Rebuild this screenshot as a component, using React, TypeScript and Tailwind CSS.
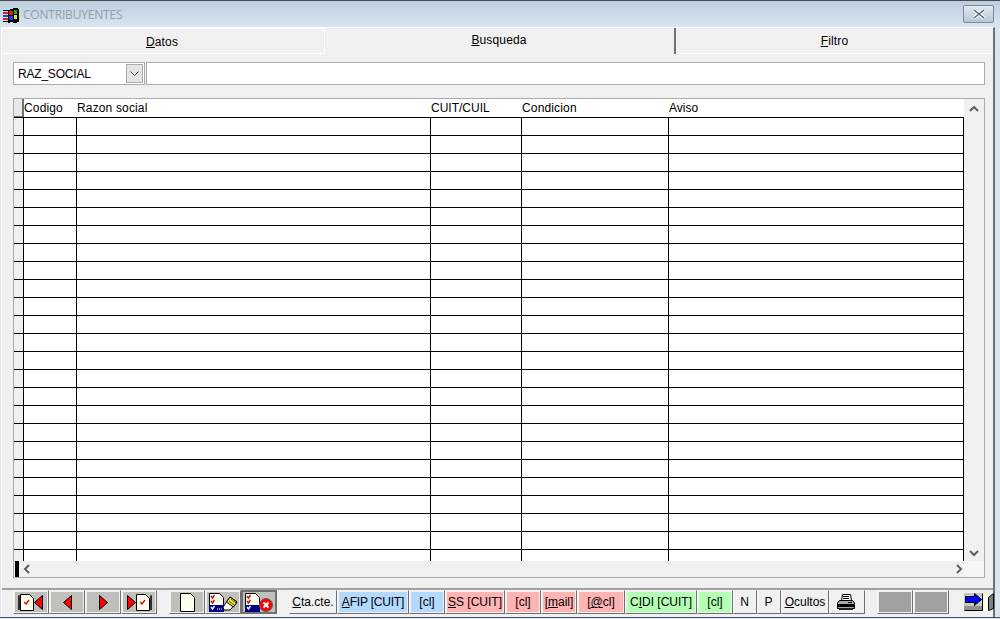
import type { ReactNode } from "react";

const FONT = "font-['Liberation_Sans',Arial,sans-serif]";

const rows = Array.from({ length: 25 }, (_, i) => i);

function WindowIcon() {
  return (
    <svg width="16" height="15" viewBox="0 0 16 15" shapeRendering="crispEdges">
      <path d="M5 2h2v-1h3v-1h5v1h1v13h-2v1h-4v-1h-3v1h-2z" fill="#000" />
      <rect x="6" y="3" width="4" height="4" fill="#e02020" />
      <rect x="11" y="2" width="3" height="4" fill="#18b818" />
      <rect x="6" y="8" width="4" height="4" fill="#2040e0" />
      <rect x="11" y="7" width="3" height="4" fill="#e8e020" />
      <rect x="0" y="2" width="5" height="1" fill="#000" />
      <rect x="0" y="4" width="5" height="2" fill="#e02020" />
      <rect x="0" y="7" width="5" height="2" fill="#2040e0" />
      <rect x="0" y="10" width="5" height="2" fill="#e02020" />
      <rect x="0" y="13" width="5" height="1" fill="#000" />
    </svg>
  );
}

function Chevron({ dir }: { dir: "up" | "down" | "left" | "right" }) {
  const d = {
    up: "M1 6 L5 2 L9 6",
    down: "M1 3 L5 7 L9 3",
    left: "M7 1 L3 5 L7 9",
    right: "M3 1 L7 5 L3 9",
  }[dir];
  return (
    <svg width="10" height="10" viewBox="0 0 10 10" fill="none">
      <path d={d} stroke="#606060" strokeWidth="2" />
    </svg>
  );
}

function Page({ x = 0 }: { x?: number }) {
  return (
    <g>
      <path d={`M${x + 0.5} 0.5H${x + 9.5}L${x + 13.5} 4.5V16.5H${x + 0.5}Z`} fill="#fffff0" stroke="#000" />
      <path d={`M${x + 4} 8l2 2 3-4`} stroke="#e00000" strokeWidth="1.3" fill="none" />
    </g>
  );
}

function FirstIcon() {
  return (
    <svg width="26" height="17" viewBox="0 0 26 17">
      <path d="M1 1v15M0 3h2M0 5h2M0 7h2M0 9h2M0 11h2M0 13h2M0 15h2" stroke="#000" />
      <Page x={2} />
      <path d="M24.5 1.5V15.5L16.5 8.5Z" fill="#ff0000" stroke="#000" />
    </svg>
  );
}

function LastIcon() {
  return (
    <svg width="26" height="17" viewBox="0 0 26 17">
      <path d="M25 1v15M24 3h2M24 5h2M24 7h2M24 9h2M24 11h2M24 13h2M24 15h2" stroke="#000" />
      <Page x={10} />
      <path d="M1.5 1.5V15.5L9.5 8.5Z" fill="#ff0000" stroke="#000" />
    </svg>
  );
}

function Arrow({ left }: { left?: boolean }) {
  return (
    <svg width="9" height="15" viewBox="0 0 9 15">
      <path d={left ? "M8.5 .5V14.5L.5 7.5Z" : "M.5 .5V14.5L8.5 7.5Z"} fill="#ff0000" stroke="#000" />
    </svg>
  );
}

function ListPage({ children }: { children?: ReactNode }) {
  return (
    <svg width="29" height="19" viewBox="0 0 29 19">
      <path d="M.5 .5H10.5L14.5 4.5V18.5H.5Z" fill="#fffff0" stroke="#000" />
      <rect x="0" y="12" width="15" height="7" fill="#000080" />
      <path d="M2 3l1.5 2 2-3M2 8l1.5 2 2-3" stroke="#e00000" strokeWidth="1.4" fill="none" />
      <path d="M2 14l1.5 2 2-3" stroke="#fff" strokeWidth="1.4" fill="none" />
      {children}
    </svg>
  );
}

function PrinterIcon() {
  return (
    <svg width="18" height="16" viewBox="0 0 18 16">
      <path d="M5.5 .5H13.5L14.5 6.5H4.5Z" fill="#fff" stroke="#000" />
      <path d="M6 2.5H12M6 4.5H12" stroke="#000" />
      <path d="M2.5 6.5H15.5L17.5 9V14.5H.5V9Z" fill="#a8a8a8" stroke="#000" />
      <rect x="1" y="10" width="16" height="3" fill="#000" />
      <rect x="11" y="8" width="4" height="1" fill="#000" />
      <rect x="2" y="14" width="14" height="2" fill="#202020" />
    </svg>
  );
}

function ExitIcon() {
  return (
    <svg width="31" height="18" viewBox="0 0 31 18">
      <rect x="0" y="0" width="18" height="18" fill="#c8c8c0" />
      <rect x="0" y="13" width="18" height="4" fill="#909090" />
      <path d="M.5 17.5H18.5V.5" fill="none" stroke="#000" />
      <path d="M1.5 3.5H10.5V.5L17.5 6.5L10.5 12.5V9.5H1.5Z" fill="#0000ff" stroke="#000" />
      <rect x="19" y="1" width="5" height="17" fill="#fffff0" />
      <path d="M24.5 17.5V4.5L29.5 .5V15.5Z" fill="#808080" stroke="#000" />
    </svg>
  );
}

function ToolButton({
  children,
  width,
  color = "bg-[#f0f0f0]",
  pressed,
}: {
  children?: ReactNode;
  width: string;
  color?: string;
  pressed?: boolean;
}) {
  return (
    <div
      className={`flex h-[24px] shrink-0 items-center justify-center text-[12px] text-black ${width} ${
        pressed
          ? "border-2 border-[#707070] bg-[#e8e8e8]"
          : "border border-t-[#f8f8f8] border-l-[#f8f8f8] border-r-[#707070] border-b-[#707070] bg-[#f0f0f0] p-[1px]"
      }`}
    >
      <div className={`flex h-full w-full items-center justify-center ${color}`}>{children}</div>
    </div>
  );
}

function GridRow() {
  return (
    <div className="flex h-[18px] shrink-0 border-b border-black">
      <div className="w-[10px] shrink-0 border-r border-black bg-[#f0f0f0]" />
      <div className="w-[53px] shrink-0 border-r border-black" />
      <div className="w-[354px] shrink-0 border-r border-black" />
      <div className="w-[91px] shrink-0 border-r border-black" />
      <div className="w-[147px] shrink-0 border-r border-black" />
      <div className="w-[295px] shrink-0 border-r border-black" />
    </div>
  );
}

export default function App() {
  return (
    <div className={`flex h-[619px] w-[1000px] flex-col overflow-hidden bg-[#d9e6f2] ${FONT} text-[12px] text-black`}>
      <div className="flex h-[27px] shrink-0 items-center justify-between border-t border-t-[#4a4a4a] bg-gradient-to-b from-[#bccddd] to-[#d8e6f3] pl-[3px] pr-[6px]">
        <div className="mt-[2px] flex items-center gap-[4px]">
          <WindowIcon />
          <span className="font-['Open_Sans',sans-serif] text-[12px] tracking-[-0.2px] text-[#969da4]">CONTRIBUYENTES</span>
        </div>
        <div className="flex h-[18px] w-[31px] items-center justify-center rounded-[2px] border border-[#7c8a99] bg-gradient-to-b from-[#dfe8f0] to-[#b8c8d8]">
          <svg width="14" height="10" viewBox="0 0 14 10">
            <path d="M2 1L12 9M12 1L2 9" stroke="#fff" strokeWidth="3.4" />
            <path d="M2 1L12 9M12 1L2 9" stroke="#5c6470" strokeWidth="1.6" />
          </svg>
        </div>
      </div>

      <div className="ml-[1px] mr-[5px] flex min-h-0 flex-1 flex-col border-l border-r-2 border-t border-white border-r-[#707070] bg-[#f0f0f0]">
        {/* tabs */}
        <div className="flex h-[26px] shrink-0 items-stretch tracking-[0.15px]">
          <div className="flex w-[323px] items-center justify-center rounded-tr-[2px] border-b border-r border-t border-white pt-[1px]">
            <span className="-ml-[2px]">
              <u>D</u>atos
            </span>
          </div>
          <div className="flex w-[351px] items-center justify-center border-r-2 border-r-[#707070] pb-[3px]">
            <span className="-ml-[1px]">
              <u>B</u>usqueda
            </span>
          </div>
          <div className="flex flex-1 items-center justify-center border-b border-white pt-[1px]">
            <span>
              <u>F</u>iltro
            </span>
          </div>
        </div>

        {/* search row */}
        <div className="ml-[11px] mt-[8px] flex h-[23px] w-[972px] shrink-0 gap-[1px]">
          <div className="flex w-[132px] items-center justify-between border border-[#ababab] bg-white pl-[4px] pr-[1px]">
            <span className="tracking-[-0.2px]">RAZ_SOCIAL</span>
            <div className="flex h-[19px] w-[17px] items-center justify-center border border-[#ababab] bg-[#e4e4e4]">
              <svg width="9" height="6" viewBox="0 0 9 6" fill="none">
                <path d="M.5 .5L4.5 4.5L8.5 .5" stroke="#505050" />
              </svg>
            </div>
          </div>
          <div className="flex-1 border border-[#ababab] bg-white" />
        </div>

        {/* grid */}
        <div className="ml-[11px] mt-[13px] flex h-[480px] w-[972px] shrink-0 flex-col border border-[#ababab] bg-[#f0f0f0]">
          <div className="flex min-h-0 flex-1">
            <div className="flex w-[950px] flex-col overflow-hidden bg-white">
              <div className="flex h-[19px] shrink-0 border-b border-black leading-[18px] tracking-[0.15px]">
                <div className="w-[10px] shrink-0 border-b border-r-2 border-b-[#707070] border-r-[#707070] bg-[#e8e8e8]" />
                <div className="w-[53px] shrink-0">Codigo</div>
                <div className="w-[354px] shrink-0">Razon social</div>
                <div className="w-[91px] shrink-0 tracking-normal">CUIT/CUIL</div>
                <div className="w-[147px] shrink-0">Condicion</div>
                <div className="w-[295px] shrink-0 tracking-normal">Aviso</div>
              </div>
              {rows.map((r) => (
                <GridRow key={r} />
              ))}
            </div>
            <div className="flex w-[20px] flex-col items-center justify-between bg-[#f0f0f0] pb-[3px] pt-[6px]">
              <Chevron dir="up" />
              <Chevron dir="down" />
            </div>
          </div>
          <div className="flex h-[16px] shrink-0 items-center">
            <div className="ml-[1px] h-full w-[4px] bg-black" />
            <div className="flex w-[945px] items-center justify-between pl-[3px]">
              <Chevron dir="left" />
              <Chevron dir="right" />
            </div>
            <div className="h-full flex-1 bg-[#f6f6f6]" />
          </div>
        </div>

        {/* toolbar */}
        <div className="mt-[10px] flex h-[29px] shrink-0 items-start border-t-2 border-[#a0a0a0] pl-[11px]">
          <ToolButton width="w-[36px]" color="bg-[#bfbfbb]">
            <FirstIcon />
          </ToolButton>
          <ToolButton width="w-[36px]" color="bg-[#bfbfbb]">
            <Arrow left />
          </ToolButton>
          <ToolButton width="w-[36px]" color="bg-[#bfbfbb]">
            <Arrow />
          </ToolButton>
          <ToolButton width="w-[36px]" color="bg-[#bfbfbb]">
            <LastIcon />
          </ToolButton>
          <div className="w-[12px] shrink-0" />
          <ToolButton width="w-[36px]" color="bg-[#bfbfbb]">
            <svg width="15" height="19" viewBox="0 0 15 19">
              <path d="M.5 .5H10.5L14.5 4.5V18.5H.5Z" fill="#fffff0" stroke="#000" />
            </svg>
          </ToolButton>
          <ToolButton width="w-[36px]" color="bg-[#bfbfbb]">
            <ListPage>
              <path d="M15 17L14 14L21 4L28 9L21 17Z" fill="#fff" stroke="#000" />
              <path d="M17.5 9L21 4L28 9L24.5 14Z" fill="#e8e040" stroke="#000" />
              <path d="M20 8L25 12M22 6L27 10" stroke="#706000" />
              <path d="M8 16h1M10 16h1M12 16h1" stroke="#fff" />
            </ListPage>
          </ToolButton>
          <ToolButton width="w-[36px]" color="bg-[#bfbfbb]" pressed>
            <ListPage>
              <circle cx="21" cy="12" r="6.5" fill="#ff0000" stroke="#606060" />
              <path d="M18.5 9.5L23.5 14.5M23.5 9.5L18.5 14.5" stroke="#fff" strokeWidth="2" />
            </ListPage>
          </ToolButton>
          <div className="w-[12px] shrink-0" />
          <ToolButton width="w-[48px]">
            <span>
              <u>C</u>ta.cte.
            </span>
          </ToolButton>
          <ToolButton width="w-[72px]" color="bg-[#b3d9ff]">
            <span className="tracking-[-0.2px]">
              <u>A</u>FIP [CUIT]
            </span>
          </ToolButton>
          <ToolButton width="w-[36px]" color="bg-[#b3d9ff]">
            [cl]
          </ToolButton>
          <ToolButton width="w-[60px]" color="bg-[#ffb3b3]">
            <span>
              <u>S</u>S [CUIT]
            </span>
          </ToolButton>
          <ToolButton width="w-[36px]" color="bg-[#ffb3b3]">
            [cl]
          </ToolButton>
          <ToolButton width="w-[36px]" color="bg-[#ffb3b3]">
            <span>
              [<u>m</u>ail]
            </span>
          </ToolButton>
          <ToolButton width="w-[48px]" color="bg-[#ffb3b3]">
            <span>
              [<u>@</u>cl]
            </span>
          </ToolButton>
          <ToolButton width="w-[72px]" color="bg-[#b3ffb3]">
            <span>
              C<u>I</u>DI [CUIT]
            </span>
          </ToolButton>
          <ToolButton width="w-[36px]" color="bg-[#b3ffb3]">
            [cl]
          </ToolButton>
          <ToolButton width="w-[24px]">
            <span className="-ml-[1px]">N</span>
          </ToolButton>
          <ToolButton width="w-[24px]">
            <span className="-ml-[1px]">P</span>
          </ToolButton>
          <ToolButton width="w-[48px]">
            <span>
              <u>O</u>cultos
            </span>
          </ToolButton>
          <ToolButton width="w-[36px]">
            <span className="-ml-[2px] flex">
              <PrinterIcon />
            </span>
          </ToolButton>
          <div className="w-[12px] shrink-0" />
          <ToolButton width="w-[36px]" color="bg-[#a0a0a0]" />
          <ToolButton width="w-[36px]" color="bg-[#a0a0a0]" />
          <div className="w-[15px] shrink-0" />
          <div className="flex h-[24px] w-[31px] shrink-0 items-center justify-center">
            <ExitIcon />
          </div>
        </div>
      </div>
      <div className="h-[2px] shrink-0 border-t border-[#4a5560] bg-[#d9e6f2]" />
    </div>
  );
}
